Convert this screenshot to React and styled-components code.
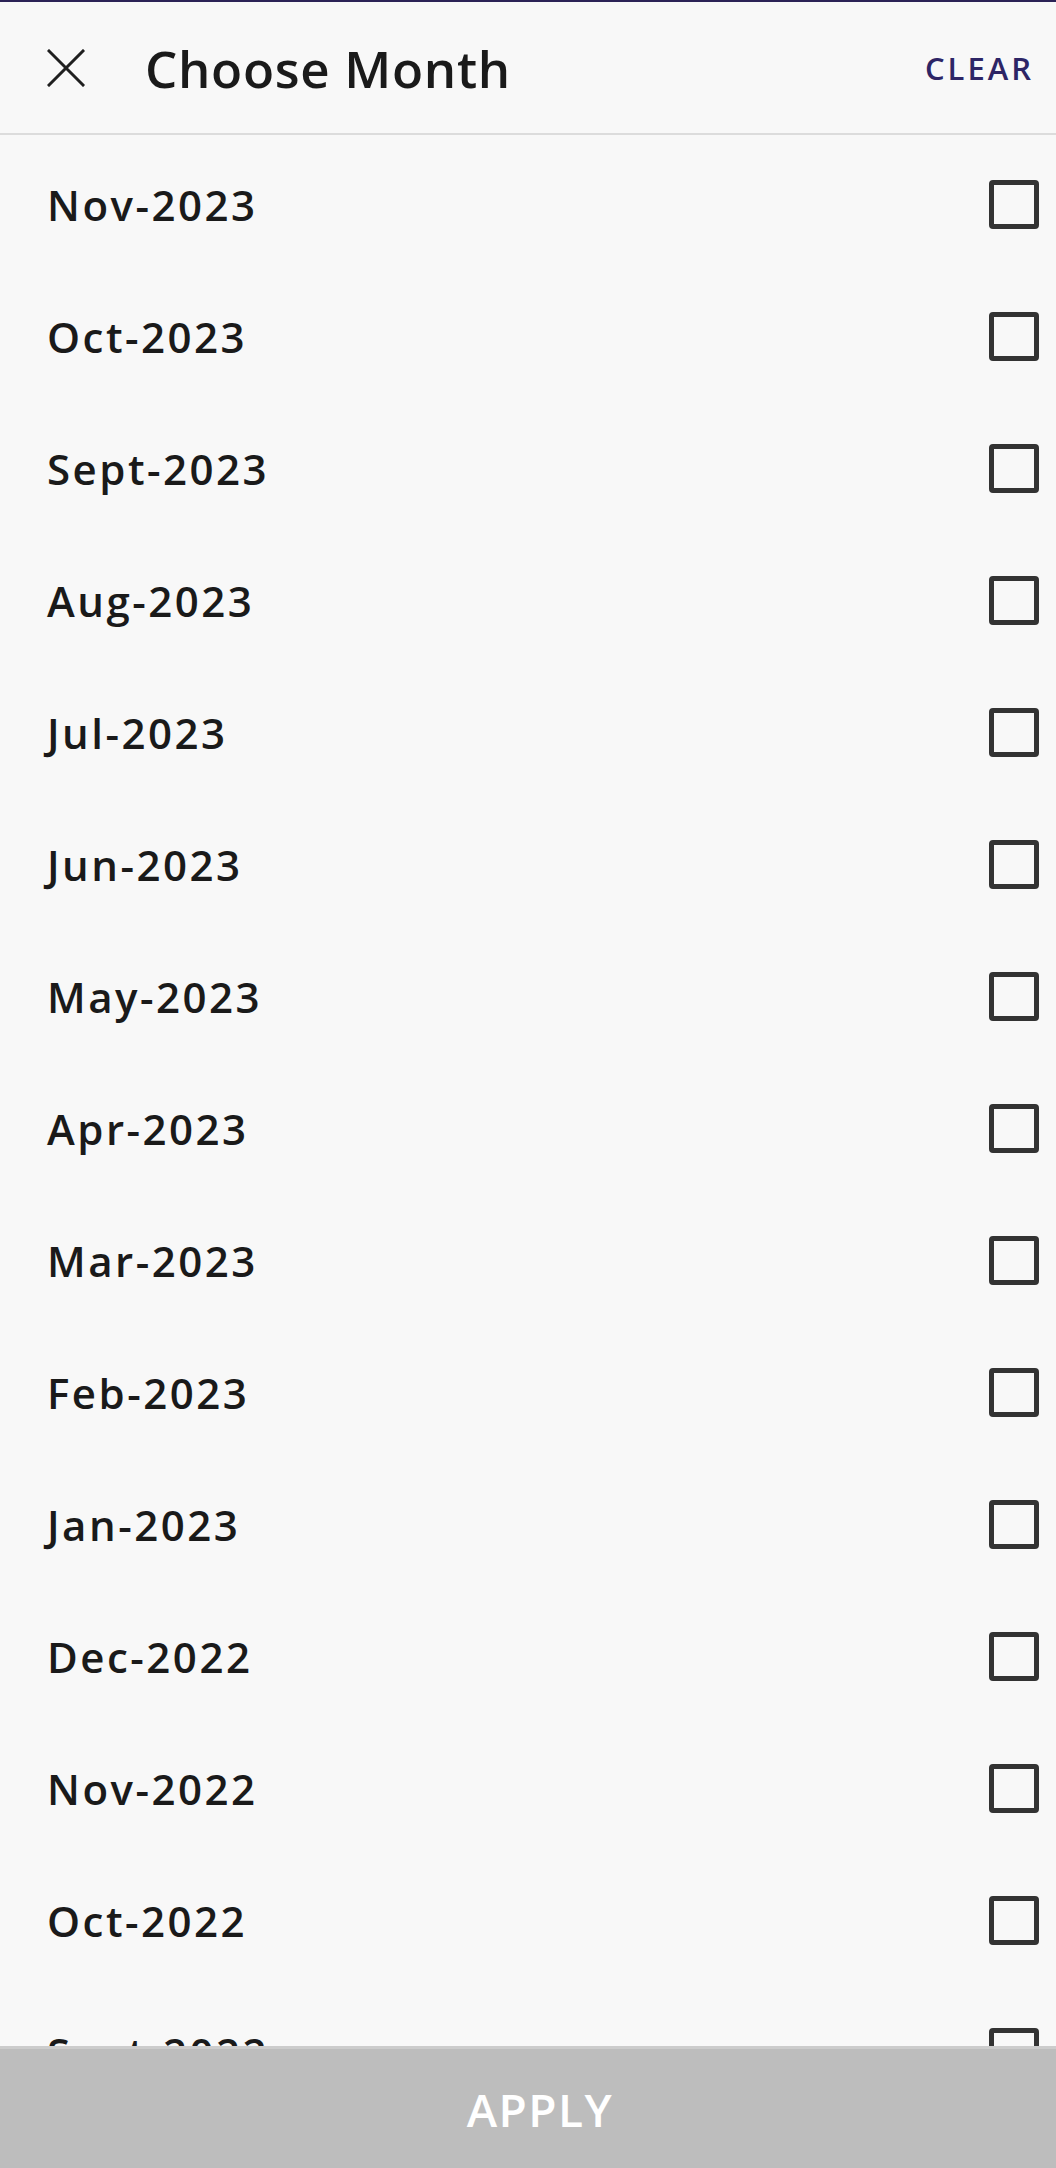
import React, { useState } from "react";
import styled, { createGlobalStyle } from "styled-components";

const GlobalStyle = createGlobalStyle`
  html, body {
    margin: 0;
    padding: 0;
    background: #f8f8f8;
  }
  * {
    box-sizing: border-box;
  }
`;

const months = [
  "Nov-2023",
  "Oct-2023",
  "Sept-2023",
  "Aug-2023",
  "Jul-2023",
  "Jun-2023",
  "May-2023",
  "Apr-2023",
  "Mar-2023",
  "Feb-2023",
  "Jan-2023",
  "Dec-2022",
  "Nov-2022",
  "Oct-2022",
  "Sept-2022",
  "Aug-2022",
  "Jul-2022",
];

const CloseIcon = () => (
  <svg width="38" height="38" viewBox="0 0 38 38" fill="none">
    <path d="M2 2L36 36M36 2L2 36" stroke="#1f1f1f" strokeWidth="3" strokeLinecap="square" />
  </svg>
);

const App = () => {
  const [checked, setChecked] = useState({});

  const toggle = (m) => setChecked((prev) => ({ ...prev, [m]: !prev[m] }));

  return (
    <>
      <GlobalStyle />
      <Page>
        <Header>
          <CloseButton>
            <CloseIcon />
          </CloseButton>
          <Title>Choose Month</Title>
          <ClearButton onClick={() => setChecked({})}>CLEAR</ClearButton>
        </Header>
        <List>
          {months.map((m) => (
            <Row key={m} onClick={() => toggle(m)}>
              <Label>{m}</Label>
              <Box $checked={!!checked[m]} />
            </Row>
          ))}
        </List>
        <ApplyBar>APPLY</ApplyBar>
      </Page>
    </>
  );
};

export default App;

const Page = styled.div`
  height: 100vh;
  display: flex;
  flex-direction: column;
  background: #f8f8f8;
  border-top: 2px solid #2b2256;
  font-family: "Open Sans", "Noto Sans", sans-serif;
  overflow: hidden;
`;

const Header = styled.div`
  flex: 0 0 auto;
  height: 133px;
  display: flex;
  align-items: center;
  padding: 0 22px 0 47px;
  border-bottom: 2px solid #dcdcdc;
`;

const CloseButton = styled.button`
  border: none;
  background: transparent;
  padding: 0;
  display: flex;
  cursor: pointer;
`;

const Title = styled.h1`
  margin: 0 0 0 60px;
  flex: 1;
  font-size: 51px;
  font-weight: 600;
  color: #1a1a1a;
  letter-spacing: 0.7px;
`;

const ClearButton = styled.button`
  border: none;
  background: transparent;
  padding: 0;
  font-family: inherit;
  font-size: 31px;
  font-weight: 600;
  color: #2d2566;
  letter-spacing: 3px;
  cursor: pointer;
`;

const List = styled.div`
  flex: 1;
  overflow: hidden;
  padding-top: 3px;
`;

const Row = styled.div`
  height: 132px;
  display: flex;
  align-items: center;
  justify-content: space-between;
  padding: 0 17px 0 47px;
  cursor: pointer;
`;

const Label = styled.span`
  font-size: 42px;
  font-weight: 600;
  color: #1a1a1a;
  letter-spacing: 2.5px;
`;

const Box = styled.span`
  width: 50px;
  height: 49px;
  border: 5px solid #333;
  border-radius: 4px;
  background: ${(p) => (p.$checked ? "#333" : "transparent")};
`;

const ApplyBar = styled.button`
  flex: 0 0 auto;
  height: 122px;
  border: none;
  border-top: 3px solid #cccccc;
  background: #bdbdbd;
  color: #ffffff;
  font-family: inherit;
  font-size: 46px;
  font-weight: 600;
  letter-spacing: 1.5px;
  padding: 0 0 0 24px;
  cursor: pointer;
`;
